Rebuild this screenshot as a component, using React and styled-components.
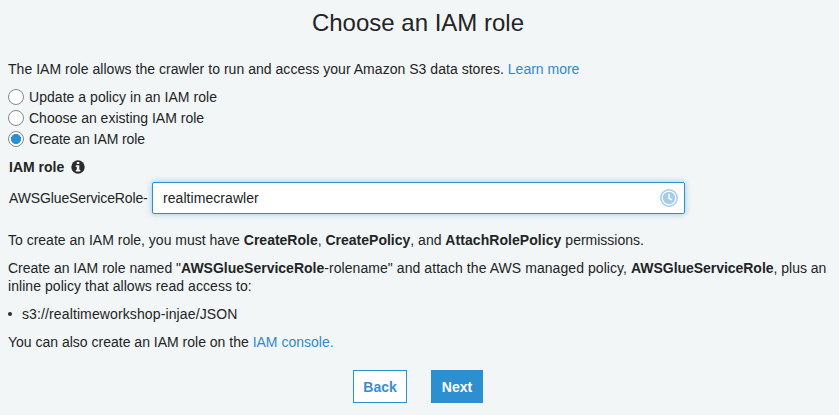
import React, { useState } from "react";
import styled, { createGlobalStyle } from "styled-components";

const GlobalStyle = createGlobalStyle`
  * { box-sizing: border-box; }
  body {
    margin: 0;
    background: #f2f6f7;
    color: #222425;
    font: 14px/18px "Helvetica Neue", "Liberation Sans", Arial, sans-serif;
  }
`;

const Page = styled.main`
  min-height: 415px;
  padding: 8px 8px 0;
  overflow: hidden;
`;

const Title = styled.h1`
  margin: 0 0 22px;
  padding-right: 3px;
  font-size: 24px;
  font-weight: 400;
  line-height: 30px;
  text-align: center;
`;

const Text = styled.p`
  margin: 0 0 ${(p) => (p.$tight ? 8 : 10)}px;
  white-space: nowrap;
`;

const Run = styled.span`
  letter-spacing: ${(p) => p.$spacing || 0}px;
  font-weight: ${(p) => (p.$bold ? 700 : 400)};
`;

const Link = styled.a`
  color: #2f89cf;
  text-decoration: none;
  letter-spacing: ${(p) => p.$spacing || 0}px;
`;

const Options = styled.div`
  display: flex;
  flex-direction: column;
  margin-bottom: 9px;
`;

const Option = styled.label`
  display: flex;
  align-items: center;
  gap: 5px;
  height: 21px;
`;

const Radio = styled.input`
  appearance: none;
  width: 16px;
  height: 16px;
  margin: 0;
  border: 1px solid #85898c;
  border-radius: 50%;
  background: #fff;
  &:checked {
    background: radial-gradient(circle, #2a8fd3 4.7px, #fff 5.4px);
  }
`;

const FieldLabel = styled.div`
  display: flex;
  align-items: center;
  gap: 7px;
  height: 18px;
  padding-left: 1px;
  margin-bottom: 6px;
`;

const Field = styled.div`
  display: flex;
  align-items: center;
  height: 32px;
  padding-left: 1px;
  margin-bottom: 17px;
`;

const Prefix = styled.span`
  width: 143px;
  white-space: nowrap;
`;

const InputBox = styled.div`
  display: flex;
  align-items: center;
  width: 533px;
  height: 32px;
  padding: 0 6px 0 10px;
  border: 1px solid #2b8fd1;
  border-radius: 2px;
  background: #fff;
  box-shadow: 0 0 6px rgba(43, 143, 209, 0.45);
`;

const Input = styled.input`
  flex: 1;
  min-width: 0;
  padding: 0;
  border: 0;
  outline: 0;
  background: none;
  color: inherit;
  font: inherit;
  letter-spacing: 0.06px;
`;

const List = styled.ul`
  margin: 0 0 10px;
  padding: 0;
  list-style: none;
`;

const Item = styled.li`
  display: flex;
  align-items: center;
  &::before {
    content: "";
    width: 4px;
    height: 4px;
    margin-right: 10px;
    border-radius: 50%;
    background: #2a2c2d;
  }
`;

const Actions = styled.div`
  display: flex;
  gap: 24px;
  padding-left: 345px;
  margin-top: 19px;
`;

const Button = styled.button`
  width: ${(p) => (p.$primary ? 52 : 54)}px;
  height: 33px;
  padding: 1px 0 0;
  border: 1px solid #2b8fd1;
  background: ${(p) => (p.$primary ? "#2b8fd1" : "#fff")};
  color: ${(p) => (p.$primary ? "#fff" : "#3a8dd0")};
  font: inherit;
  font-weight: 700;
`;

const InfoIcon = () => (
  <svg width="14" height="14" viewBox="0 0 14 14">
    <circle cx="7" cy="7" r="6.7" fill="#2a2c2d" />
    <path d="M5.8 2h2.5v2H5.8zM4.8 5.2h3.5v4.6h1v1.8H4.8V9.8h1V7h-1z" fill="#f2f6f7" />
  </svg>
);

const ClockIcon = () => (
  <svg width="18" height="18" viewBox="0 0 18 18">
    <circle cx="9" cy="9" r="8.2" fill="none" stroke="#a5ccec" strokeWidth="1.5" />
    <circle cx="9" cy="9" r="6.2" fill="#a5ccec" />
    <path d="M9 4.8V9.2l3 1.6" fill="none" stroke="#fff" strokeWidth="1.5" />
  </svg>
);

const options = [
  ["update", "Update a policy in an IAM role", 0.04],
  ["choose", "Choose an existing IAM role", 0],
  ["create", "Create an IAM role", -0.08],
];

export default function App() {
  const [mode, setMode] = useState("create");
  const [name, setName] = useState("realtimecrawler");
  return (
    <Page>
      <GlobalStyle />
      <Title>Choose an IAM role</Title>
      <Text $tight>
        <Run $spacing={0.033}>The IAM role allows the crawler to run and access your Amazon S3 data stores. </Run>
        <Link>Learn more</Link>
      </Text>
      <Options>
        {options.map(([id, label, spacing]) => (
          <Option key={id}>
            <Radio type="radio" name="mode" checked={mode === id} onChange={() => setMode(id)} />
            <Run $spacing={spacing}>{label}</Run>
          </Option>
        ))}
      </Options>
      <FieldLabel>
        <Run $bold>IAM role</Run>
        <InfoIcon />
      </FieldLabel>
      <Field>
        <Prefix><Run $spacing={-0.13}>AWSGlueServiceRole-</Run></Prefix>
        <InputBox>
          <Input value={name} onChange={(e) => setName(e.target.value)} />
          <ClockIcon />
        </InputBox>
      </Field>
      <Text>
        <Run>To create an IAM role, you must have </Run>
        <Run $bold>CreateRole</Run>
        <Run>, </Run>
        <Run $bold>CreatePolicy</Run>
        <Run>, and </Run>
        <Run $bold $spacing={0.06}>AttachRolePolicy</Run>
        <Run> permissions.</Run>
      </Text>
      <Text>
        <Run>Create an IAM role named "</Run>
        <Run $bold>AWSGlueServiceRole</Run>
        <Run $spacing={0.065}>-rolename" and attach the AWS managed policy, </Run>
        <Run $bold $spacing={-0.04}>AWSGlueServiceRole</Run>
        <Run>, plus an</Run>
        <br />
        <Run $spacing={0.06}>inline policy that allows read access to:</Run>
      </Text>
      <List>
        <Item><Run $spacing={0.12}>s3://realtimeworkshop-injae/JSON</Run></Item>
      </List>
      <Text>
        <Run>You can also create an IAM role on the </Run>
        <Link>IAM console.</Link>
      </Text>
      <Actions>
        <Button>Back</Button>
        <Button $primary>Next</Button>
      </Actions>
    </Page>
  );
}
